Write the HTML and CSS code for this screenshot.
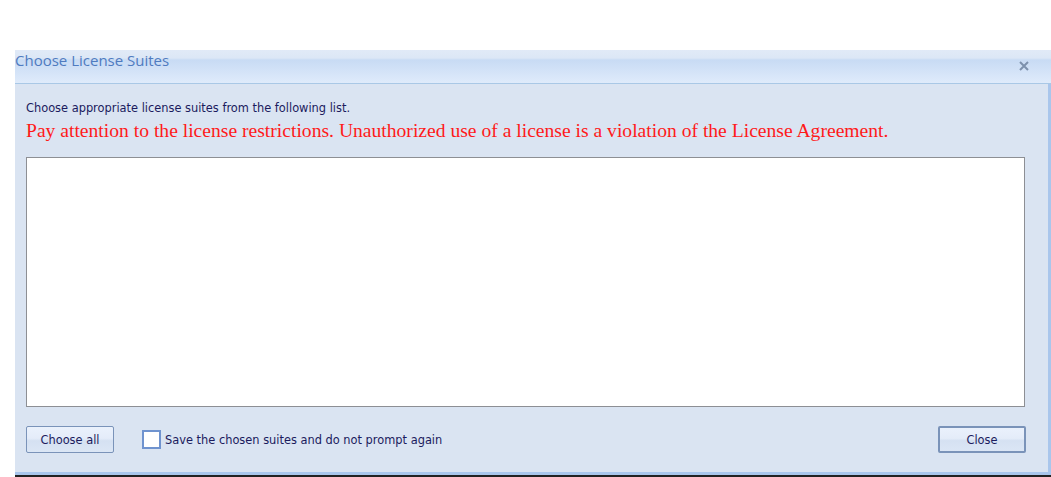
FILE: index.html
```html
<!DOCTYPE html>
<html lang="en">
  <head>
    <meta charset="UTF-8" />
    <title>Choose License Suites</title>
    <link rel="stylesheet" href="styles.css">
  </head>
  <body>
    <div class="dialog">
      <div class="title-bar">
        <span class="title">Choose License Suites</span>
        <svg class="close-x" width="10" height="10" viewBox="0 0 10 10">
          <path d="M1 1 L9 9 M9 1 L1 9" stroke="#7d91ad" stroke-width="2" fill="none" />
        </svg>
      </div>
      <div class="dialog-body">
        <p class="intro">Choose appropriate license suites from the following list.</p>
        <p class="warning">Pay attention to the license restrictions. Unauthorized use of a license is a violation of the License Agreement.</p>
        <div class="suite-list"></div>
        <div class="footer">
          <button class="btn">Choose all</button>
          <label class="save-check">
            <span class="box"></span>
            Save the chosen suites and do not prompt again
          </label>
          <button class="btn btn-close">Close</button>
        </div>
      </div>
      <div class="bottom-edge"></div>
    </div>
  </body>
</html>
```

FILE: styles.css
```css
body {
  margin: 0;
  background: #fff;
  font-family: "DejaVu Sans", Tahoma, sans-serif;
  font-size: 11.4px;
  color: #1b1b5e;
}

.dialog {
  margin: 50px 0 0 15px;
  width: 1036px;
}

.title-bar {
  height: 33px;
  display: flex;
  justify-content: space-between;
  align-items: flex-start;
  background: linear-gradient(#e1eaf7 0, #dce7f6 8px, #c8dbf4 10px, #dfebfb 33px);
  border-bottom: 1px solid #a9c8e6;
}

.title {
  font-family: "Open Sans", "Liberation Sans", sans-serif;
  font-size: 15px;
  color: #4f7bc0;
  margin-top: 0;
}

.close-x {
  margin: 11px 22px 0 0;
}

.dialog-body {
  background: #dae4f2;
  border-right: 3px solid #a9c6ec;
  padding: 17px 23px 17px 11px;
  height: 354px;
}

.intro {
  margin: 0;
  line-height: 14px;
}

.warning {
  margin: 4px 0 0 0;
  font-family: "Liberation Serif", "Times New Roman", serif;
  font-size: 19.6px;
  line-height: 23px;
  color: #ff1a1a;
}

.suite-list {
  margin-top: 15px;
  height: 248px;
  background: #fff;
  border: 1px solid #8d8f94;
}

.footer {
  display: flex;
  align-items: center;
  margin-top: 19px;
}

.btn {
  width: 88px;
  height: 27px;
  font-family: "DejaVu Sans", Tahoma, sans-serif;
  font-size: 11.4px;
  color: #1b1b5e;
  border: 1px solid #7a93b9;
  border-radius: 2px;
  background: linear-gradient(#eaf1fc 0, #e4ecf9 45%, #d5e1f2 55%, #dbe6f5 100%);
  padding: 0;
}

.btn-close {
  margin-right: -1px;
  border-width: 2px;
}

.save-check {
  display: flex;
  align-items: center;
  margin-left: 28px;
  flex: 1;
}

.box {
  width: 15px;
  height: 15px;
  border: 2px solid #6f93cf;
  background: #fff;
  margin-right: 4px;
}

.bottom-edge {
  height: 3px;
  background: #a9c6ec;
  border-bottom: 2px solid #222;
}
```
